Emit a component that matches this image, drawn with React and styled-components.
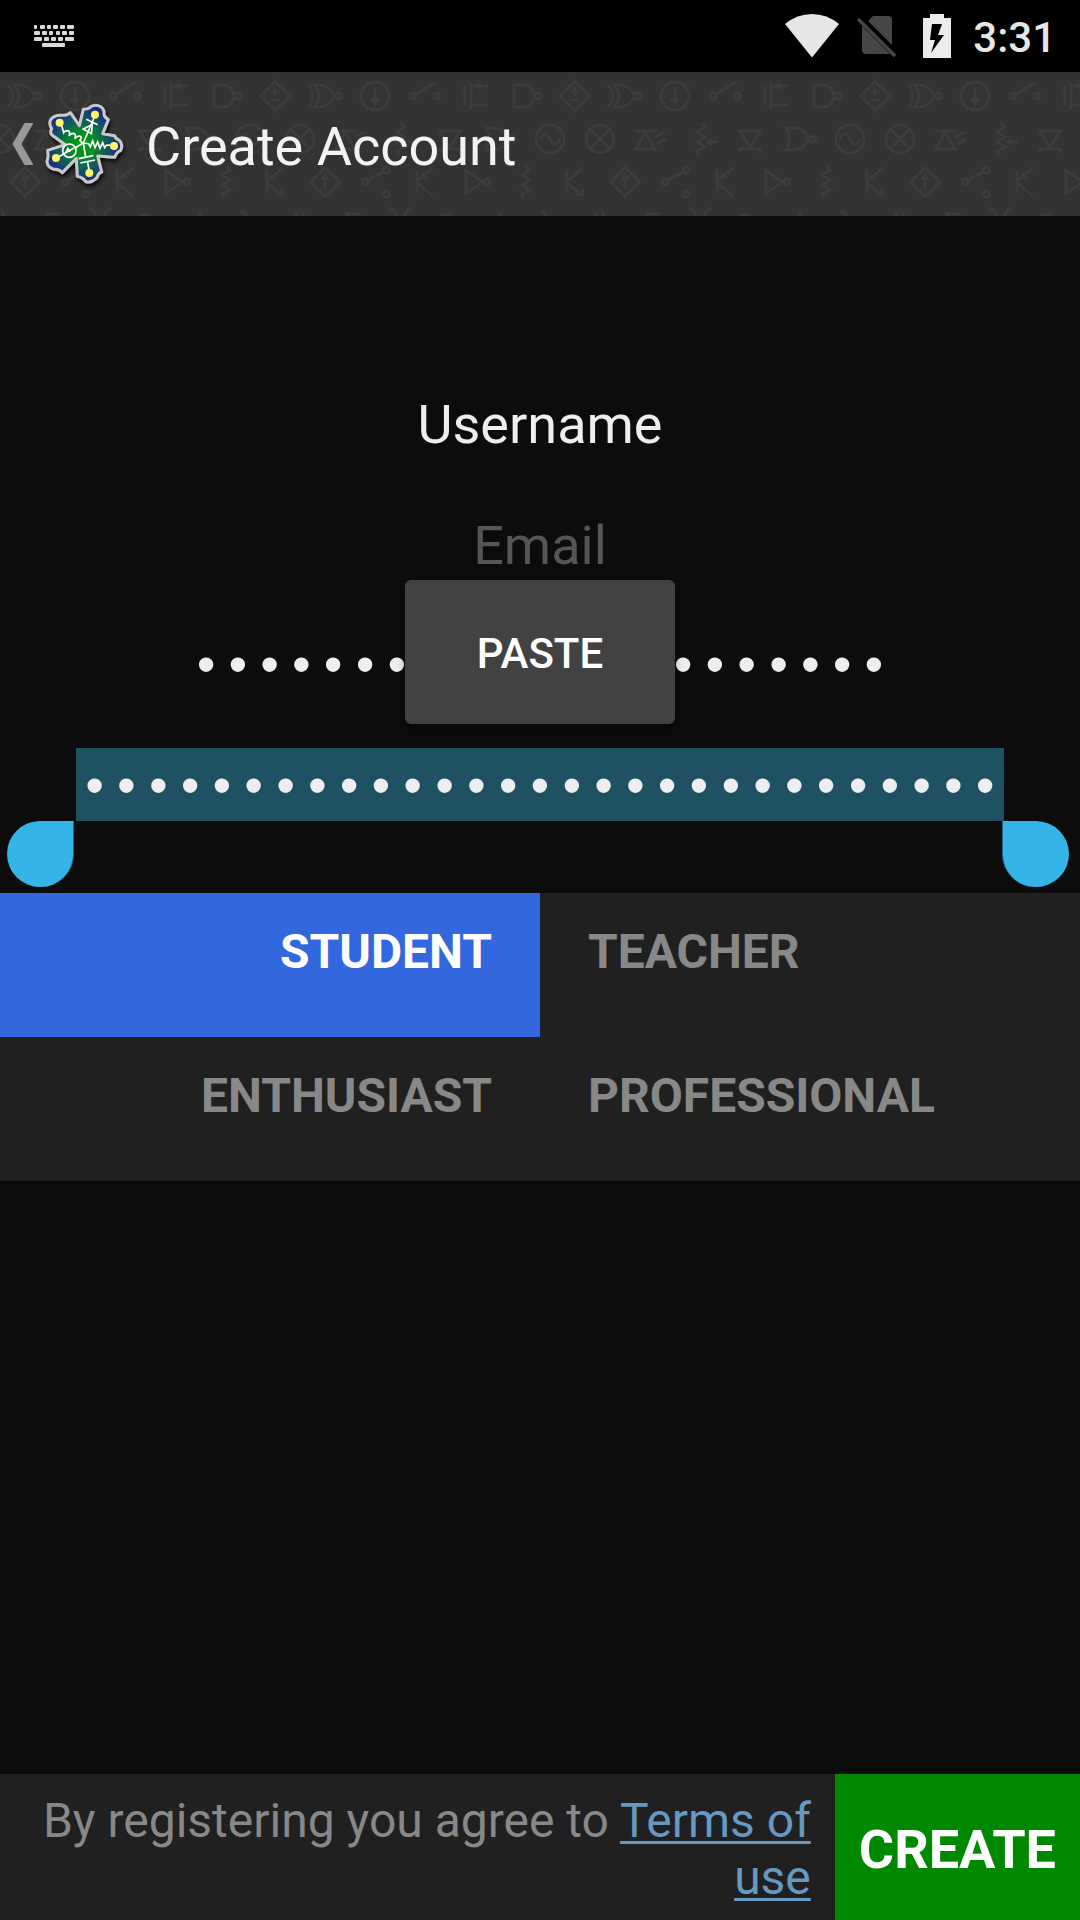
import React, { useState } from "react";
import styled, { createGlobalStyle } from "styled-components";

const GlobalStyle = createGlobalStyle`
  *, *::before, *::after { box-sizing: border-box; }
  body {
    margin: 0;
    background: #0c0c0c;
    font-family: Roboto, "Liberation Sans", sans-serif;
  }
  button, input { font: inherit; border: 0; margin: 0; padding: 0; border-radius: 0; }
`;

const Screen = styled.div`
  display: flex;
  flex-direction: column;
  min-height: 100vh;
  background: #0c0c0c;
`;

const StatusBar = styled.div`
  display: flex;
  align-items: center;
  justify-content: space-between;
  height: 72px;
  padding: 0 24px 0 34px;
  background: #000;
`;

const StatusIcons = styled.div`
  display: flex;
  align-items: center;
`;

const StatusSvg = styled.svg`
  display: block;
  margin-right: ${(p) => p.$gap}px;
`;

const Clock = styled.time`
  color: #e6e6e6;
  font-size: 42px;
  font-weight: 500;
  line-height: 48px;
  padding-top: 4px;
`;

const Header = styled.header`
  position: relative;
  display: flex;
  align-items: center;
  height: 144px;
  padding-left: 12px;
  background: #333;
  overflow: hidden;
`;

const Backdrop = styled.svg`
  position: absolute;
  inset: 0;
  width: 100%;
  height: 100%;
`;

const UpLink = styled.a`
  position: relative;
  display: flex;
  align-items: center;
`;

const Title = styled.h1`
  position: relative;
  margin: 0;
  padding: 6px 0 0 12px;
  color: #f3f3f3;
  font-size: 54px;
  font-weight: 400;
  line-height: 64px;
`;

const Form = styled.form`
  flex: 1;
  display: flex;
  flex-direction: column;
`;

const Fields = styled.div`
  display: flex;
  flex-direction: column;
  padding: 145px 0 48px;
`;

const Field = styled.div`
  position: relative;
  display: flex;
  justify-content: center;
  padding: 24px 0;
`;

const TextInput = styled.input`
  width: 100%;
  height: 73px;
  padding-top: 6px;
  background: transparent;
  color: #eee;
  font-size: 54px;
  text-align: center;
  outline: none;
  &::placeholder { color: #555; opacity: 1; }
`;

const SecretInput = styled(TextInput)`
  width: auto;
  padding: 10px 3px 0;
  field-sizing: content;
  font-family: "Liberation Mono", monospace;
  font-size: 53px;
  background: ${(p) => (p.$selected ? "#1e5162" : "transparent")};
`;

const Selection = styled.div`
  position: relative;
  display: flex;
`;

const Handle = styled.span`
  position: absolute;
  top: 100%;
  width: 67px;
  height: 66px;
  background: #35b5e7;
  border: solid #1e6a86;
  ${(p) =>
    p.$side === "start"
      ? "right: calc(100% + 2px); border-width: 0 1px 0 0; border-radius: 33px 0 33px 33px;"
      : "left: calc(100% - 2px); border-width: 0 0 0 1px; border-radius: 0 33px 33px 33px;"}
`;

const PasteButton = styled.button`
  position: absolute;
  bottom: 0;
  left: 50%;
  margin-left: -135px;
  width: 270px;
  height: 144px;
  padding-top: 2px;
  border-radius: 6px;
  background: #424242;
  box-shadow: 0 4px 8px rgba(0, 0, 0, 0.3);
  color: #fff;
  font-size: 42px;
  font-weight: 500;
`;

const Roles = styled.fieldset`
  display: grid;
  grid-template-columns: 1fr 1fr;
  margin: 0;
  padding: 0;
  border: 0;
  background: #202020;
`;

const Role = styled.label`
  display: block;
  height: 144px;
  padding: 30px 48px;
  background: ${(p) => (p.$active ? "#3367dd" : "transparent")};
  color: ${(p) => (p.$active ? "#fff" : "#888")};
  font-size: 48px;
  font-weight: 700;
  line-height: 57px;
  text-align: ${(p) => p.$align};
  cursor: pointer;
`;

const RoleInput = styled.input`
  appearance: none;
  width: 0;
  height: 0;
`;

const Footer = styled.footer`
  display: flex;
  margin-top: auto;
  background: #202020;
`;

const Terms = styled.p`
  flex: 1;
  margin: 0;
  padding: 18px 24px 14px;
  color: #888;
  font-size: 48px;
  line-height: 57px;
  text-align: right;
`;

const TermsLink = styled.a`
  color: #6699c2;
  text-decoration: underline;
  text-decoration-thickness: 3px;
  text-underline-offset: 4px;
  text-decoration-skip-ink: none;
`;

const CreateButton = styled.button`
  padding: 4px 24px 0;
  background: #008800;
  color: #fff;
  font-size: 54px;
  font-weight: 700;
`;

const KEYS = [
  [0, [[0, 3], [6, 11], [13, 17], [19, 24], [26, 31], [33, 40]]],
  [6, [[0, 6], [8, 13], [15, 19], [22, 26], [28, 33], [35, 40]]],
  [12, [[0, 8], [10, 15], [17, 22], [24, 29], [31, 40]]],
  [18, [[8, 31]]],
];

function KeyboardIcon() {
  return (
    <StatusSvg width="40" height="22" viewBox="0 0 40 22" fill="#d8d8d8" $gap={0} aria-hidden="true">
      {KEYS.map(([y, keys]) =>
        keys.map(([a, b]) => <rect key={`${y}-${a}`} x={a} y={y} width={b - a} height="4" rx="1" />)
      )}
    </StatusSvg>
  );
}

function CircuitBackdrop() {
  return (
    <Backdrop aria-hidden="true">
      <defs>
        <pattern id="circuit" width="300" height="160" patternUnits="userSpaceOnUse">
          <g fill="none" stroke="#3c3c3c" strokeWidth="2.6">
            <path d="M9 13q7 11 0 22M15 13q7 11 0 22h5q9 0 15-11q-6-11-15-11z" />
            <circle cx="38" cy="24" r="3" />
            <circle cx="75" cy="24" r="14" />
            <path d="M75 15v14" />
            <circle cx="113" cy="24" r="3" />
            <circle cx="137" cy="24" r="3" />
            <path d="M116 22l20-12" />
            <path d="M165 14v19M171 10v27M172 14h16M171 33h17" />
            <path d="M214 13h9a11 11 0 0 1 0 22h-9z" />
            <circle cx="238" cy="24" r="3" />
            <path d="M275 9.500l14.500 14.500l-14.500 14.500l-14.500-14.500zM275 15v9M270.500 19.500h9M271 28h8" />

            <circle cx="0" cy="67" r="14" />
            <circle cx="300" cy="67" r="14" />
            <path d="M-9 58l18 18M-9 76l18-18M291 58l18 18M291 76l18-18" />
            <path d="M35 59h22M45 60l-9 17h19zM55 65l9-5M57 72l9-5" />
            <path d="M101 51l4 4l-8 5l8 5l-8 5l8 5l-8 4l2 4M107 70h11" />
            <path d="M140 59h20l-10 17zM140 80v-3h20v4" />
            <path d="M186 56q7 11 0 22h8q9 0 15-11q-6-11-15-11z" />
            <circle cx="213" cy="67" r="3" />
            <circle cx="250" cy="67" r="14" />
            <path d="M240 67q5-11 10 0t10 0" />

            <path d="M267 98v23M267 109l16-13M267 111l12 10" />
            <path d="M25 95.500l14.500 14.500l-14.500 14.500l-14.500-14.500zM25 106v11" />
            <circle cx="65" cy="110" r="3" />
            <circle cx="86" cy="98" r="3" />
            <circle cx="86" cy="122" r="3" />
            <path d="M68 108l15-8" />
            <path d="M117 98v23M117 109l16-13M117 111l16 13" />
            <path d="M166 99v22l17-11z" />
            <circle cx="187" cy="110" r="3" />
            <path d="M226 94l4 4l-8 5l8 5l-8 5l8 5l-8 4l2 4" />

            <path d="M-4 140v6M3 140v6M296 140v6M47 142h14M47 140v5M89 137q6 0 7 7M112 137q-6 0-7 7M140 143h10M200 140v5M241 138l6 6" />
          </g>
          <g fill="#3c3c3c">
            <path d="M70 26h10l-5 9zM173 14l8-4v8zM105 70l7-4v8zM275 124l9-8v8zM20 108h10l-5-8zM120 107l2-8l6 7z" />
          </g>
        </pattern>
      </defs>
      <rect width="100%" height="100%" fill="url(#circuit)" />
    </Backdrop>
  );
}

function AppLogo() {
  return (
    <svg width="100" height="102" viewBox="12 -6 300 306" aria-hidden="true">
      <defs>
        <radialGradient id="leaf" gradientUnits="userSpaceOnUse" cx="156" cy="148" r="112">
          <stop offset="0" stopColor="#02a30c" />
          <stop offset="0.350" stopColor="#078a25" />
          <stop offset="0.700" stopColor="#135463" />
          <stop offset="1" stopColor="#1c2b88" />
        </radialGradient>
        <filter id="soft" x="-20%" y="-20%" width="140%" height="140%">
          <feDropShadow dx="4" dy="9" stdDeviation="6" floodColor="#000" floodOpacity="0.850" />
        </filter>
      </defs>
      <path
        filter="url(#soft)"
        fill="url(#leaf)"
        stroke="#c9c9c9"
        strokeWidth="9"
        strokeLinejoin="round"
        d="M160 43Q176 43 182 35Q197 26 212 35Q224 44 222 58Q224 68 235 74L218 116L254 122Q256 132 268 136Q280 150 272 166Q259 171 254 187L203 183L215 231Q204 234 202 246Q188 264 168 260Q156 246 142 244L139 190L97 233Q88 222 72 223Q52 217 51 200Q57 183 53 166L106 149L66 120Q59 113 65 101Q56 88 62 74Q74 58 98 61Q112 62 121 53L148 92Z"
      />
      <g fill="none" stroke="#fff" strokeWidth="5">
        <path d="M160 144L193 66M158 145L150 136q8-12-2-13q-12 2-14 9q6-16-4-17q-10 1-13 8q5-15-4-16q-9 0-12 6L94 88" />
        <path d="M160 102l24 14l3-28zM169 73l34 16" />
        <path d="M160 144l16 2l5 10l7-18l7 20l8-17l7 19l8-17l6 15l6-8l12 1" />
        <path d="M160 144l7 42M146 191l44-9M151 204l44-9M173 202l5 28" />
        <circle cx="118" cy="167" r="20" />
        <path d="M160 144l-24 14M132 159L80 189" />
      </g>
      <path d="M104 175l9-19l10 13z" fill="#fff" />
      <g fill="#fcf760">
        <circle cx="89" cy="83" r="12" />
        <circle cx="195" cy="59" r="12" />
        <circle cx="252" cy="153" r="12" />
        <circle cx="178" cy="234" r="12" />
        <circle cx="78" cy="189" r="12" />
      </g>
    </svg>
  );
}

const ROLES = ["STUDENT", "TEACHER", "ENTHUSIAST", "PROFESSIONAL"];

export default function App() {
  const [role, setRole] = useState("STUDENT");
  return (
    <Screen>
      <GlobalStyle />
      <StatusBar>
        <KeyboardIcon />
        <StatusIcons>
          <StatusSvg width="54" height="44" viewBox="0 0 54 44" fill="#e6e6e6" $gap={18} aria-hidden="true">
            <path d="M0 10Q12 0 27 0T54 10L27 43.500Z" />
          </StatusSvg>
          <StatusSvg width="40" height="44" viewBox="0 0 40 44" $gap={26} aria-hidden="true">
            <path fill="#464646" d="M11 7L16 2H31q4 0 4 4V31zM5 12L33 40H9q-4 0-4-4z" />
            <path stroke="#464646" strokeWidth="3.500" d="M1 5L38 42" />
          </StatusSvg>
          <StatusSvg width="28" height="44" viewBox="0 0 28 44" $gap={22} aria-hidden="true">
            <path fill="#ebebeb" fillRule="evenodd" d="M7 0H21V4H28V44H0V4H7zM9 10L7 26H12L8 39L21 21H15L19 10z" />
          </StatusSvg>
          <Clock>3:31</Clock>
        </StatusIcons>
      </StatusBar>

      <Header>
        <CircuitBackdrop />
        <UpLink href="#back" aria-label="Navigate up">
          <svg width="22" height="42" viewBox="0 0 22 42" aria-hidden="true">
            <path d="M13 0H21L9 21L21 42H13L1 21Z" fill="#999" stroke="#999" strokeWidth="1" />
          </svg>
          <AppLogo />
        </UpLink>
        <Title>Create Account</Title>
      </Header>

      <Form onSubmit={(e) => e.preventDefault()}>
        <Fields>
          <Field>
            <TextInput type="text" aria-label="Username" defaultValue="Username" />
          </Field>
          <Field>
            <TextInput type="email" aria-label="Email" placeholder="Email" />
          </Field>
          <Field>
            <SecretInput type="password" aria-label="Password" defaultValue={"x".repeat(22)} />
            <PasteButton type="button">PASTE</PasteButton>
          </Field>
          <Field>
            <Selection>
              <SecretInput $selected type="password" aria-label="Confirm password" defaultValue={"x".repeat(29)} />
              <Handle $side="start" />
              <Handle $side="end" />
            </Selection>
          </Field>
        </Fields>

        <Roles aria-label="Account type">
          {ROLES.map((name, i) => (
            <Role key={name} $active={role === name} $align={i % 2 ? "left" : "right"}>
              <RoleInput type="radio" name="role" checked={role === name} onChange={() => setRole(name)} />
              {name}
            </Role>
          ))}
        </Roles>

        <Footer>
          <Terms>
            By registering you agree to <TermsLink href="#terms">Terms of use</TermsLink>
          </Terms>
          <CreateButton type="submit">CREATE</CreateButton>
        </Footer>
      </Form>
    </Screen>
  );
}
